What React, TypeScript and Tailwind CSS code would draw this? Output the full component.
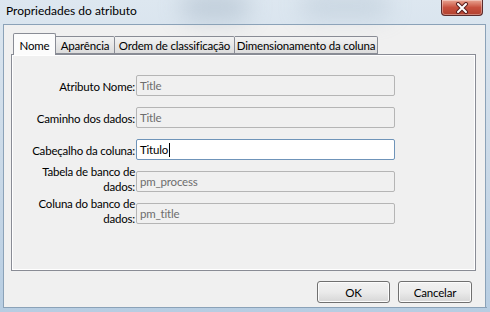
import React from 'react';

const rows = [
  { id: 'nome', lines: ['Atributo Nome:'], value: 'Title', active: false },
  { id: 'caminho', lines: ['Caminho dos dados:'], value: 'Title', active: false },
  { id: 'cabecalho', lines: ['Cabeçalho da coluna:'], value: 'Titulo', active: true },
  { id: 'tabela', lines: ['Tabela de banco de', 'dados:'], value: 'pm_process', active: false },
  { id: 'coluna', lines: ['Coluna do banco de', 'dados:'], value: 'pm_title', active: false },
];

const tabs = [
  { id: 'nome', label: 'Nome', w: 'w-[43px]' },
  { id: 'aparencia', label: 'Aparência', w: 'w-[59px]' },
  { id: 'ordem', label: 'Ordem de classificação', w: 'w-[120px]' },
  { id: 'dimensao', label: 'Dimensionamento da coluna', w: 'w-[143px]' },
];

const App: React.FC = () => {
  return (
    <div
      className="relative w-[490px] h-[312px] overflow-hidden bg-gradient-to-b from-[#dde7f0] via-[#cbdae8] to-[#b7cde2] text-[11.5px] tracking-[-0.2px] text-black"
      style={{ fontFamily: 'Lato, "Noto Sans", sans-serif' }}
    >
      {/* aero glass blur */}
      <div className="absolute left-[180px] top-[-6px] w-[70px] h-[26px] rounded-full bg-[#8fa2b4] opacity-40 blur-md" />
      <div className="absolute left-[300px] top-[-4px] w-[90px] h-[20px] rounded-full bg-[#9fb2c2] opacity-40 blur-md" />

      {/* Title bar */}
      <div className="relative h-[24px] flex items-start justify-between">
        <div className="pl-[6px] pt-[3px] leading-[16px] text-[12px] tracking-[0px] text-black">Propriedades do atributo</div>
        <button className="mr-[7px] w-[42px] h-[16px] rounded-b-[4px] border border-t-0 border-[#5a2b2b] bg-gradient-to-b from-[#e8a493] via-[#c7503e] to-[#b2412f] flex items-center justify-center shadow-[inset_0_0_0_1px_rgba(255,255,255,0.35)]">
          <svg width="14" height="12" viewBox="0 0 14 12">
            <path d="M3 2 L11 10 M11 2 L3 10" stroke="#5b2020" strokeWidth="4" strokeLinecap="round" />
            <path d="M3 2 L11 10 M11 2 L3 10" stroke="#ffffff" strokeWidth="2" strokeLinecap="round" />
          </svg>
        </button>
      </div>

      {/* Client area */}
      <div className="ml-[3px] mr-[4px] h-[283px] bg-[#f0f0f0] border-t border-l border-r border-[#8ba2b8] flex flex-col">
        {/* Tab strip */}
        <div className="ml-[7px] mr-[9px] mt-[7px] flex flex-col">
          <div className="flex items-end h-[22px] pl-[2px] relative z-10">
            {tabs.map((t, i) =>
              i === 0 ? (
                <div
                  key={t.id}
                  className={`${t.w} h-[22px] border border-b-0 border-[#898c95] rounded-t-[2px] bg-[#fcfcfc] flex items-start justify-center pt-[5px] leading-[14px] mb-[-1px] pb-[1px]`}
                >
                  {t.label}
                </div>
              ) : (
                <div
                  key={t.id}
                  className={`${t.w} h-[18px] border border-l-0 border-[#898c95] rounded-tr-[2px] bg-gradient-to-b from-[#f3f3f3] to-[#dcdcdc] flex items-start justify-center pt-[2px] leading-[14px] whitespace-nowrap`}
                >
                  {t.label}
                </div>
              )
            )}
          </div>

          {/* Tab page */}
          <div className="h-[217px] border border-[#898c95] bg-[#f0f0f0] shadow-[inset_1px_1px_0_#ffffff,inset_-1px_-1px_0_#ffffff] flex flex-col pt-[20px] gap-[11px]">
            {rows.map((r) => (
              <div key={r.id} className="flex items-start h-[21px] pl-[19px]">
                <div
                  className={`w-[104px] flex flex-col items-end leading-[15px] whitespace-nowrap ${
                    r.lines.length > 1 ? 'mt-[-7px]' : 'mt-[4px]'
                  }`}
                >
                  {r.lines.map((l) => (
                    <span key={l}>{l}</span>
                  ))}
                </div>
                <div
                  className={`ml-[1px] w-[259px] h-[21px] rounded-[2px] border flex items-center pl-[3px] leading-[15px] ${
                    r.active
                      ? 'bg-white border-[#6f94b9] text-black'
                      : 'bg-[#f0f0f0] border-[#b5b5b5] text-[#6d6d6d]'
                  }`}
                >
                  <span>{r.value}</span>
                  {r.active && <span className="ml-[1px] inline-block w-[1px] h-[14px] bg-black" />}
                </div>
              </div>
            ))}
          </div>
        </div>

        {/* Buttons */}
        <div className="mt-[10px] flex justify-end gap-[8px] pr-[13px]">
          <button className="w-[73px] h-[22px] rounded-[3px] border border-[#707070] bg-gradient-to-b from-[#f2f2f2] via-[#ebebeb] to-[#d6d6d6] shadow-[inset_0_0_0_1px_#fcfcfc] leading-[15px]">
            OK
          </button>
          <button className="w-[74px] h-[22px] rounded-[3px] border border-[#707070] bg-gradient-to-b from-[#f2f2f2] via-[#ebebeb] to-[#d6d6d6] shadow-[inset_0_0_0_1px_#fcfcfc] leading-[15px]">
            Cancelar
          </button>
        </div>
      </div>
      <div className="mx-[3px] h-[1px] bg-[#8ba2b8]" />
    </div>
  );
};

export default App;
